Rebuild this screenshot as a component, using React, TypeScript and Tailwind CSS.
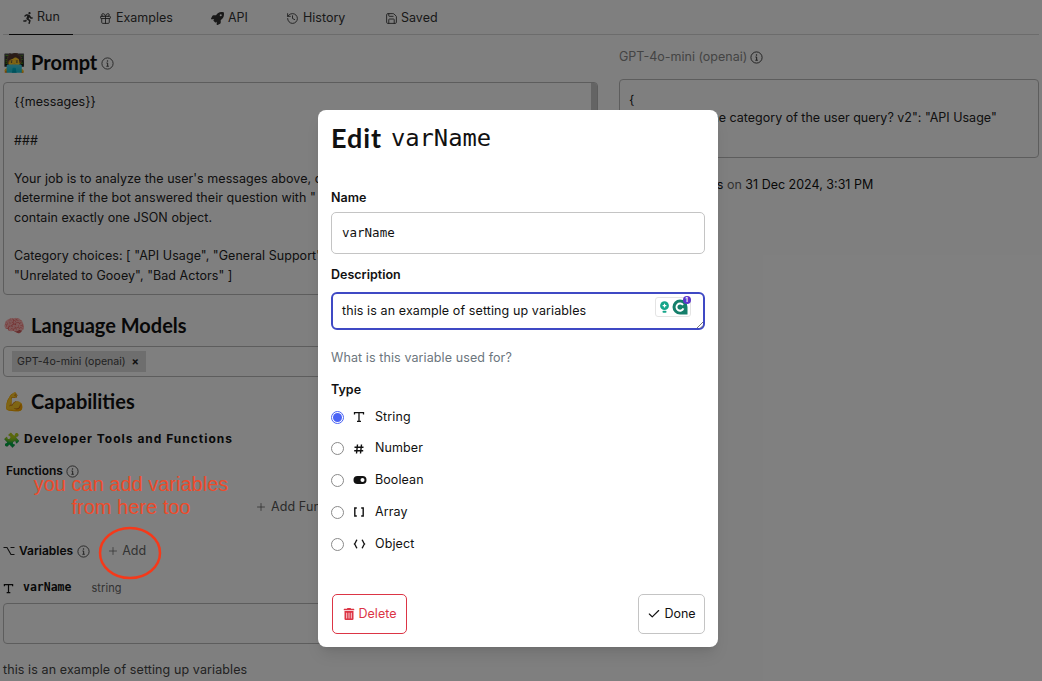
import React from "react";
import { Check, Plus, Gift, History, Save } from "lucide-react";
import { FaRunning, FaRocket, FaTrashAlt } from "react-icons/fa";

const sans = "font-['Inter','Liberation_Sans',sans-serif]";
const head = "font-['Lato','Inter',sans-serif]";
const mono = "font-['DejaVu_Sans_Mono','Liberation_Mono',monospace]";

function Info({ cls = "" }: { cls?: string }) {
  return (
    <svg viewBox="0 0 16 16" width="13" height="13" className={cls} fill="none" stroke="currentColor">
      <circle cx="8" cy="8" r="6.9" strokeWidth="1.1" />
      <circle cx="8" cy="4.8" r="0.9" fill="currentColor" stroke="none" />
      <path d="M6.7 7.4H8.2V11.2M6.6 11.4H9.6" strokeWidth="1.2" />
    </svg>
  );
}

function TIcon({ size = 12 }: { size?: number }) {
  return (
    <svg viewBox="0 0 12 12" width={size} height={size} fill="none" stroke="currentColor" strokeWidth="1.3">
      <path d="M1.5 3.5V1.7H10.5V3.5M6 1.7V10.4M4 10.4H8" />
    </svg>
  );
}

function HashIcon() {
  return (
    <svg viewBox="0 0 12 12" width="12" height="12" fill="none" stroke="currentColor" strokeWidth="1.4">
      <path d="M4.5 1.5L3.5 10.5M8.5 1.5L7.5 10.5M1.5 4.3H10.5M1.2 7.7H10.2" />
    </svg>
  );
}

function ToggleIcon() {
  return (
    <svg viewBox="0 0 14 10" width="14" height="10">
      <rect x="0.5" y="1" width="13" height="8" rx="4" fill="currentColor" />
      <circle cx="9.5" cy="5" r="2" fill="#fff" />
    </svg>
  );
}

function BracketIcon() {
  return (
    <svg viewBox="0 0 12 12" width="12" height="12" fill="none" stroke="currentColor" strokeWidth="1.4">
      <path d="M3.8 2H1.8V10H3.8M8.2 2H10.2V10H8.2" />
    </svg>
  );
}

function BraceIcon() {
  return (
    <svg viewBox="0 0 14 12" width="13" height="12" fill="none" stroke="currentColor" strokeWidth="1.4">
      <path d="M4.5 1.6C3 2.2 3.2 4.6 1.6 6C3.2 7.4 3 9.8 4.5 10.4M9.5 1.6C11 2.2 10.8 4.6 12.4 6C10.8 7.4 11 9.8 9.5 10.4" />
    </svg>
  );
}

function OptionIcon() {
  return (
    <svg viewBox="0 0 12 12" width="12" height="12" fill="none" stroke="currentColor" strokeWidth="1.1">
      <path d="M0.5 2.5H4L8 9.5H11.5M7.5 2.5H11.5" />
    </svg>
  );
}

const tabs = [
  { label: "Run", icon: <FaRunning size={12} />, w: "w-[64px] border-b border-[#111] pl-[13px] gap-[3px]" },
  { label: "Examples", icon: <Gift size={13} strokeWidth={1.6} />, w: "w-[112px] pl-[13px] ml-[13px] gap-[4px]" },
  { label: "API", icon: <FaRocket size={13} />, w: "w-[75px] pl-[13px] gap-[4px]" },
  { label: "History", icon: <History size={13} strokeWidth={1.6} />, w: "w-[99px] pl-[13px] gap-[4px]" },
  { label: "Saved", icon: <Save size={13} strokeWidth={1.6} />, w: "w-[80px] pl-[13px] gap-[3px]" },
];

const types = [
  { label: "String", icon: <TIcon />, h: "h-[32px]", on: true },
  { label: "Number", icon: <HashIcon />, h: "h-[31px]" },
  { label: "Boolean", icon: <ToggleIcon />, h: "h-[32px]" },
  { label: "Array", icon: <BracketIcon />, h: "h-[32px]" },
  { label: "Object", icon: <BraceIcon />, h: "h-[32px]" },
];

export default function App() {
  return (
    <div className={`relative h-[681px] w-[1042px] overflow-hidden bg-white text-[12.5px] tracking-[0.1px] text-[#111] ${sans}`}>
      {/* Page */}
      <div className="px-[3px]">
        <div className="flex h-[35px] items-stretch border-b border-[#d8d8d8] pl-[6px]">
          {tabs.map(({ label, icon, w }) => (
            <div key={label} className={`flex h-[35px] items-center pt-[1px] text-[12.5px] tracking-normal text-[#333] ${w}`}>
              {icon}
              <span>{label}</span>
            </div>
          ))}
        </div>

        <div className="flex gap-[21px]">
          {/* Left column */}
          <div className="w-[595px] shrink-0">
            <div className={`mt-[13px] flex h-[28px] items-center gap-[3px] text-[20px] font-bold tracking-normal ${head}`}>
              <span className="w-[25px] text-[18px] font-normal">🧑‍💻</span>
              <span>Prompt</span>
              <Info cls="text-[#444] ml-[1px] mt-[2px]" />
            </div>
            <div className="relative mt-[6px] h-[213px] overflow-hidden rounded-[4px] border border-[#bbb] pl-[10px] pr-[10px] pt-[9px] text-[12.5px] leading-[19.3px] tracking-[0.05px] text-[#222]">
              <div>{"{{messages}}"}</div>
              <div className="mt-[19.3px]">###</div>
              <div className="mt-[19.3px]">Your job is to analyze the user's messages above, decide which category best fits, and</div>
              <div>determine if the bot answered their question with "</div>
              <div>contain exactly one JSON object.</div>
              <div className="mt-[19.3px]">Category choices: [ "API Usage", "General Support",</div>
              <div>"Unrelated to Gooey", "Bad Actors" ]</div>
              <div className="absolute bottom-0 right-0 top-0 w-[6px] bg-[#c9c9c9]" />
            </div>

            <div className={`mt-[16px] flex h-[28px] items-center gap-[3px] text-[20px] font-bold tracking-normal ${head}`}>
              <span className="w-[25px] text-[18px] font-normal">🧠</span>
              <span>Language Models</span>
            </div>
            <div className="mt-[7px] flex h-[31px] items-center rounded-[4px] border border-[#bbb] pl-[8px]">
              <div className="flex h-[21px] w-[134px] items-center justify-between bg-[#dcdcdc] pl-[5px] pr-[7px] text-[10.6px] tracking-normal text-[#444]">
                <span>GPT-4o-mini (openai)</span>
                <span className="text-[11px] font-bold text-[#222]">×</span>
              </div>
            </div>

            <div className={`mt-[10px] flex h-[28px] items-center gap-[3px] text-[20px] font-bold tracking-normal ${head}`}>
              <span className="w-[25px] text-[18px] font-normal">💪</span>
              <span>Capabilities</span>
            </div>
            <div className="mt-[15px] flex h-[18px] items-center gap-[3px] text-[12px] font-bold tracking-[1px]">
              <span className="w-[18px] text-[14px] font-normal">🧩</span>
              <span>Developer Tools and Functions</span>
            </div>

            <div className="mt-[14px] flex h-[18px] items-center gap-[3px] pl-[3px] text-[12px] font-semibold tracking-normal">
              <span>Functions</span>
              <Info cls="text-[#444]" />
            </div>
            <div className="mt-[17px] flex h-[20px] items-center gap-[4px] pl-[252px] text-[12.5px] text-[#555]">
              <Plus size={12} strokeWidth={1.5} />
              <span>Add Functions</span>
            </div>

            <div className="mt-[24px] flex h-[20px] items-center text-[12px] font-semibold tracking-normal">
              <span className="mr-[4px] w-[12px] text-[#222]"><OptionIcon /></span>
              <span>Variables</span>
              <Info cls="ml-[4px] text-[#444]" />
              <div className="ml-[17px] flex items-center gap-[3px] text-[12.5px] font-normal text-[#666]">
                <Plus size={12} strokeWidth={1.5} />
                <span>Add</span>
              </div>
            </div>
            <div className="mt-[18px] flex h-[18px] items-center">
              <TIcon size={11} />
              <span className={`ml-[9px] text-[11.5px] font-bold tracking-normal ${mono}`}>varName</span>
              <span className="ml-[20px] text-[11px] text-[#666]">string</span>
            </div>
            <div className="mt-[6px] h-[41px] rounded-[4px] border border-[#bbb]" />
            <div className="mt-[17px] text-[12.5px] text-[#444]">this is an example of setting up variables</div>
          </div>

          {/* Right column */}
          <div className="w-[420px] shrink-0">
            <div className="mt-[13px] flex h-[18px] items-center gap-[3px] text-[12.5px] tracking-normal text-[#888]">
              <span>GPT-4o-mini (openai)</span>
              <Info cls="text-[#333]" />
            </div>
            <div className="mt-[13px] h-[79px] rounded-[4px] border border-[#bbb] pl-[9px] pt-[11px] text-[12.5px] leading-[18px] tracking-normal text-[#222]">
              <div>{"{"}</div>
              <div className="pl-[25px]">"What is the category of the user query? v2": "API Usage"</div>
            </div>
            <div className="mt-[18px] text-[12.5px] tracking-normal text-[#666]">
              <span className="text-[#111]">Generated in 3.3s</span> on <span className="text-[#111]">31 Dec 2024, 3:31 PM</span>
            </div>
          </div>
        </div>
      </div>

      {/* Overlay */}
      <div className="absolute inset-0 bg-black/50 pl-[318px] pt-[110px]">
        <div className="h-[537px] w-[400px] rounded-[8px] bg-white px-[13px] pt-[12px] text-[#111] shadow-lg">
          <div className={`flex h-[33px] items-center gap-[9px] text-[27px] font-bold tracking-[0.9px] ${head}`}>
            <span>Edit</span>
            <span className={`text-[23.8px] font-normal tracking-normal ${mono}`}>varName</span>
          </div>

          <div className="mt-[34px] text-[12.5px] font-semibold leading-[18px] tracking-normal">Name</div>
          <div className={`mt-[5px] flex h-[42px] items-center rounded-[5px] border border-[#c4c4c4] pl-[10px] text-[12.5px] tracking-normal ${mono}`}>
            varName
          </div>

          <div className="mt-[12px] text-[12.5px] font-semibold leading-[18px] tracking-normal">Description</div>
          <div className="relative mt-[8px] flex h-[38px] items-center rounded-[6px] border-2 border-[#3f49c4] pl-[9px] text-[12.5px]">
            <span className="mt-[1px]">this is an example of setting up variables</span>
            <div className="absolute right-[12px] top-[3px] flex h-[20px] w-[36px] items-center justify-center gap-[2px] rounded-[3px] border border-[#e4e4e4]">
              <svg viewBox="0 0 12 14" width="11" height="13">
                <circle cx="6" cy="5" r="4.8" fill="#15a58a" />
                <rect x="3.8" y="10.6" width="4.4" height="2" rx="1" fill="#15a58a" />
                <path d="M6 3V7M4 5H8" stroke="#fff" strokeWidth="1.3" />
              </svg>
              <div className="relative">
                <svg viewBox="0 0 16 16" width="16" height="16">
                  <path d="M8 .5A7.5 7.5 0 1 0 8 15.5H15.5V8A7.5 7.5 0 0 0 8 .5Z" fill="#157f6b" />
                  <path d="M11 6A3.6 3.6 0 1 0 11.4 9.4" fill="none" stroke="#fff" strokeWidth="1.9" />
                </svg>
                <span className="absolute right-[-3px] top-[-3px] flex h-[8px] w-[8px] items-center justify-center rounded-full bg-[#5b35c9] text-[6px] font-bold leading-none tracking-normal text-white">
                  1
                </span>
              </div>
            </div>
            <svg className="absolute bottom-0 right-0 text-[#555]" width="7" height="7" viewBox="0 0 7 7" stroke="currentColor" strokeWidth="0.8">
              <path d="M1 7L7 1M4.5 7L7 4.5" />
            </svg>
          </div>

          <div className="mt-[19px] text-[12.5px] leading-[18px] text-[#6c757d]">What is this variable used for?</div>

          <div className="mt-[14px] text-[12.5px] font-semibold leading-[18px] tracking-normal">Type</div>
          <div className="mt-[2px]">
            {types.map((t) => (
              <div key={t.label} className={`flex items-center ${t.h}`}>
                {t.on ? (
                  <span className="flex h-[13px] w-[13px] items-center justify-center rounded-full border border-[#4a63f5]">
                    <span className="h-[9px] w-[9px] rounded-full bg-[#4a63f5]" />
                  </span>
                ) : (
                  <span className="h-[13px] w-[13px] rounded-full border border-[#8a8a8a]" />
                )}
                <span className="ml-[9px] flex w-[21px] justify-start">{t.icon}</span>
                <span className="ml-[1px] text-[12.5px]">{t.label}</span>
              </div>
            ))}
          </div>

          <div className="mt-[34px] flex items-center justify-between pl-[1px]">
            <div className="flex h-[40px] w-[75px] items-center justify-center gap-[4px] rounded-[5px] border border-[#dc3545] text-[12.5px] tracking-normal text-[#dc3545]">
              <FaTrashAlt size={12} />
              <span>Delete</span>
            </div>
            <div className="flex h-[40px] w-[67px] items-center justify-center gap-[3px] rounded-[5px] border border-[#c4c4c4] text-[12.5px] tracking-normal">
              <Check size={14} strokeWidth={2} />
              <span>Done</span>
            </div>
          </div>
        </div>
      </div>

      {/* Annotation drawn on top of the dimmed page */}
      <div className="absolute left-[21px] top-[473px] w-[220px] text-center font-['Liberation_Sans',sans-serif] text-[20px] leading-[23px] tracking-normal text-[#ee4b2b]">
        you can add variables
        <br />
        from here too
      </div>
      <svg className="absolute left-[98px] top-[525px]" width="66" height="56" viewBox="0 0 66 56" fill="none">
        <ellipse cx="32" cy="28" rx="30" ry="25" stroke="#f5391a" strokeWidth="2.5" />
      </svg>
    </div>
  );
}
